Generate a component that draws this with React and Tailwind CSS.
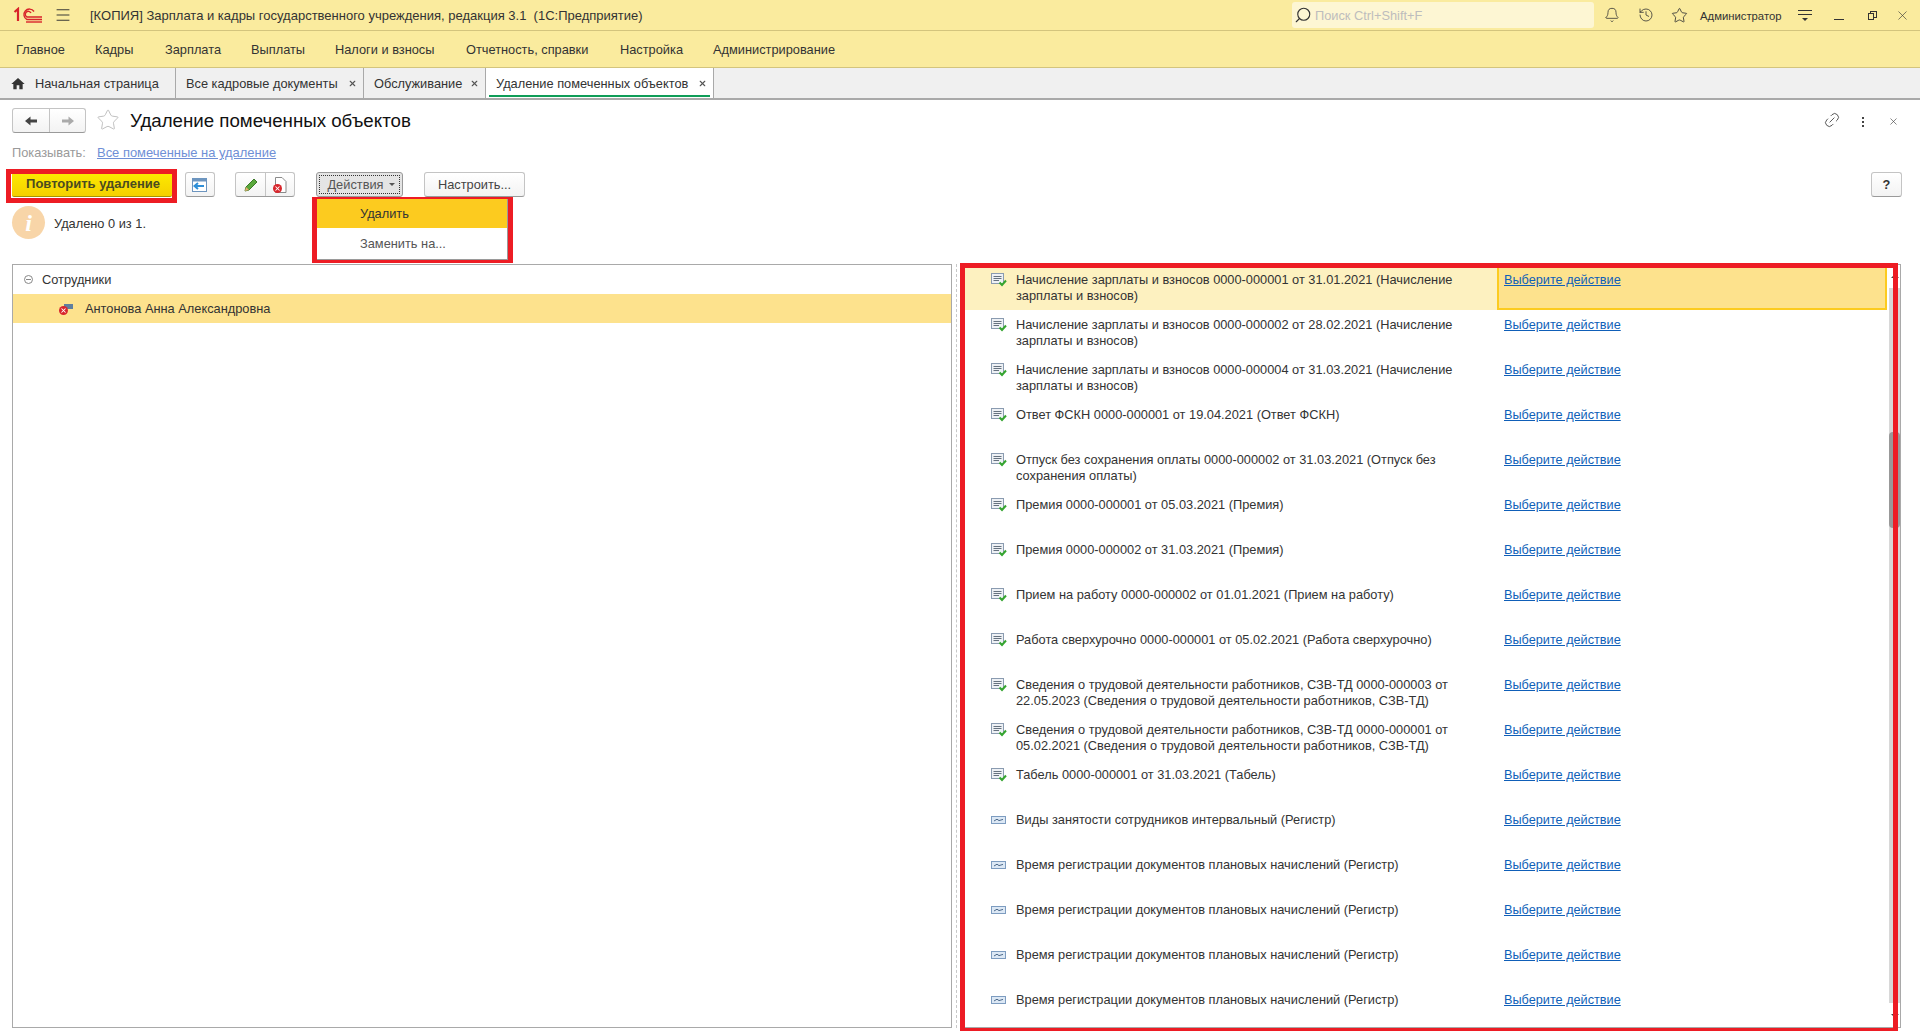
import React from "react";
import { Bell, History, Star, Link2, Search, X, Menu } from "lucide-react";
import { MdHome } from "react-icons/md";

const menu = [
  ["Главное", "w-[79px]"],
  ["Кадры", "w-[70px]"],
  ["Зарплата", "w-[86px]"],
  ["Выплаты", "w-[84px]"],
  ["Налоги и взносы", "w-[131px]"],
  ["Отчетность, справки", "w-[154px]"],
  ["Настройка", "w-[93px]"],
  ["Администрирование", "w-auto"],
];

const docs = [
  ["d", "Начисление зарплаты и взносов 0000-000001 от 31.01.2021 (Начисление", "зарплаты и взносов)"],
  ["d", "Начисление зарплаты и взносов 0000-000002 от 28.02.2021 (Начисление", "зарплаты и взносов)"],
  ["d", "Начисление зарплаты и взносов 0000-000004 от 31.03.2021 (Начисление", "зарплаты и взносов)"],
  ["d", "Ответ ФСКН 0000-000001 от 19.04.2021 (Ответ ФСКН)"],
  ["d", "Отпуск без сохранения оплаты 0000-000002 от 31.03.2021 (Отпуск без", "сохранения оплаты)"],
  ["d", "Премия 0000-000001 от 05.03.2021 (Премия)"],
  ["d", "Премия 0000-000002 от 31.03.2021 (Премия)"],
  ["d", "Прием на работу 0000-000002 от 01.01.2021 (Прием на работу)"],
  ["d", "Работа сверхурочно 0000-000001 от 05.02.2021 (Работа сверхурочно)"],
  ["d", "Сведения о трудовой деятельности работников, СЗВ-ТД 0000-000003 от", "22.05.2023 (Сведения о трудовой деятельности работников, СЗВ-ТД)"],
  ["d", "Сведения о трудовой деятельности работников, СЗВ-ТД 0000-000001 от", "05.02.2021 (Сведения о трудовой деятельности работников, СЗВ-ТД)"],
  ["d", "Табель 0000-000001 от 31.03.2021 (Табель)"],
  ["r", "Виды занятости сотрудников интервальный (Регистр)"],
  ["r", "Время регистрации документов плановых начислений (Регистр)"],
  ["r", "Время регистрации документов плановых начислений (Регистр)"],
  ["r", "Время регистрации документов плановых начислений (Регистр)"],
  ["r", "Время регистрации документов плановых начислений (Регистр)"],
];

function Logo() {
  return (
    <svg width="30" height="16" viewBox="0 0 30 16" fill="none" stroke="#d8232a">
      <path d="M1.5 5 L5 2 V14" strokeWidth="2.2" />
      <path d="M21 4.5 A5.5 5.5 0 1 0 14 12.5 H29" strokeWidth="1.4" />
      <path d="M18 6 A3 3 0 1 0 14 10 H29" strokeWidth="1.4" />
      <path d="M13 15 H29" strokeWidth="1.4" />
    </svg>
  );
}

function DocIcon() {
  return (
    <svg width="16" height="14" viewBox="0 0 16 14" className="shrink-0">
      <rect x="0.5" y="0.5" width="12" height="10" fill="#eef1f5" stroke="#8a9bb0" />
      <path d="M2.5 3.5 H10.5 M2.5 5.5 H10.5 M2.5 7.5 H8" stroke="#66727f" />
      <path d="M8.5 9.5 L11 12 L15 7.5" fill="none" stroke="#35a52f" strokeWidth="2" />
    </svg>
  );
}

function RegIcon() {
  return (
    <svg width="16" height="9" viewBox="0 0 16 9" className="shrink-0">
      <rect x="0.5" y="0.5" width="14" height="7" fill="#dce8f5" stroke="#7d9cc0" />
      <path d="M3 5 L6 3.2 L8 4.6 L12 3.4" fill="none" stroke="#4d6a8a" />
    </svg>
  );
}

function NavArrow({ color, flip }) {
  return (
    <svg width="14" height="12" viewBox="0 0 14 12" className={flip ? "-scale-x-100" : ""}>
      <path d="M1 6 L6.5 1.5 V4.5 H13 V7.5 H6.5 V10.5 Z" fill={color} />
    </svg>
  );
}

function DeletedMark({ className }) {
  return (
    <span className={"flex items-center justify-center rounded-full bg-[#d8262c] text-white " + className}>
      <X size={7} strokeWidth={3.5} />
    </span>
  );
}

function Btn({ className, children }) {
  return (
    <div className={"flex h-[25px] items-center justify-center rounded-[3px] border border-[#c4c4c4] border-b-[#9a9a9a] bg-gradient-to-b from-white to-[#f3f3f3] " + className}>
      {children}
    </div>
  );
}

function Row({ item, selected }) {
  const [kind, line1, line2] = item;
  return (
    <div className={"flex h-[45px] shrink-0 " + (selected ? "bg-[#fdf1c0]" : "")}>
      <div className={"flex w-[55px] shrink-0 justify-start pl-[30px] " + (kind === "d" ? "pt-[8px]" : "pt-[11px]")}>
        {kind === "d" ? <DocIcon /> : <RegIcon />}
      </div>
      <div className="w-[481px] shrink-0 pt-[7px] text-[#333333]">
        <div className="h-4 whitespace-nowrap">{line1}</div>
        {line2 && <div className="h-4 whitespace-nowrap">{line2}</div>}
      </div>
      <div className={"flex-1 pt-[7px] " + (selected ? "border-x-2 border-b-2 border-[#fccb1f] bg-[#fde28d] pl-[5px]" : "pl-[7px]")}>
        <span className="text-[12.7px] text-[#0f5fb8] underline">Выберите действие</span>
      </div>
    </div>
  );
}

export default function App() {
  return (
    <div className="relative flex h-[1031px] w-[1920px] flex-col overflow-hidden bg-white text-[12.8px] leading-4 text-[#333333] [font-family:'Liberation_Sans',Arial,sans-serif]">
      {/* title bar */}
      <div className="flex h-[31px] shrink-0 items-center border-b border-[#d3c47d] bg-[#faeb9e]">
        <div className="ml-[13px] flex w-[40px]"><Logo /></div>
        <Menu size={18} strokeWidth={1.3} className="ml-[1px] text-[#333333]" />
        <div className="ml-[18px] mt-px whitespace-nowrap text-[13px]">[КОПИЯ] Зарплата и кадры государственного учреждения, редакция 3.1&nbsp; (1С:Предприятие)</div>
        <div className="ml-auto flex h-[26px] w-[302px] items-center rounded-[3px] bg-[#fdf6d3] pl-[2px] text-[#bdbdbd]">
          <Search size={18} strokeWidth={1.5} className="mr-[3px] -scale-x-100 text-[#333333]" />
          <span className="mt-px">Поиск Ctrl+Shift+F</span>
        </div>
        <Bell size={16} strokeWidth={1.2} className="ml-[10px] text-[#333333]" />
        <History size={16} strokeWidth={1.2} className="ml-[18px] text-[#333333]" />
        <Star size={17} strokeWidth={1.2} className="ml-[17px] text-[#333333]" />
        <div className="ml-[12px] mt-px w-[83px] text-[11.3px]">Администратор</div>
        <div className="ml-[15px] flex w-[14px] flex-col items-center gap-[3px]">
          <div className="h-px w-[14px] bg-[#333333]" />
          <div className="h-px w-[14px] bg-[#333333]" />
          <div className="h-0 w-0 border-x-[3px] border-t-[3px] border-x-transparent border-t-[#333333]" />
        </div>
        <div className="ml-[22px] mt-[9px] h-px w-[10px] bg-[#333333]" />
        <div className="relative ml-[24px] h-[9px] w-[9px]">
          <div className="absolute left-[2px] top-0 h-[7px] w-[7px] border border-[#333333]" />
          <div className="absolute bottom-0 left-0 h-[7px] w-[6px] border border-[#333333] bg-[#faeb9e]" />
        </div>
        <X size={15} strokeWidth={1} className="ml-[18px] mr-[10px] text-[#333333]" />
      </div>

      {/* main menu */}
      <div className="flex h-[37px] shrink-0 items-center border-b border-[#d3c47d] bg-[#faeb9e] pl-[16px] pt-px">
        {menu.map(([name, w]) => (
          <div key={name} className={"whitespace-nowrap " + w}>{name}</div>
        ))}
      </div>

      {/* tabs */}
      <div className="flex h-[32px] shrink-0 border-b-2 border-[#a9a9a9] bg-[#f0f0f0]">
        <div className="flex w-[176px] items-center border-r border-[#a9a9a9] pl-[10px] pt-px">
          <MdHome size={16} className="mr-[9px] text-[#333333]" />
          Начальная страница
        </div>
        <div className="flex w-[188px] items-center justify-between border-r border-[#a9a9a9] pl-[10px] pr-[6px] pt-px">
          Все кадровые документы <X size={9} strokeWidth={3} className="text-[#555555]" />
        </div>
        <div className="flex w-[122px] items-center justify-between border-r border-[#a9a9a9] pl-[10px] pr-[6px] pt-px">
          Обслуживание <X size={9} strokeWidth={3} className="text-[#555555]" />
        </div>
        <div className="relative flex w-[228px] items-center justify-between border-r border-[#a9a9a9] bg-white pl-[10px] pr-[6px] pt-px">
          Удаление помеченных объектов <X size={9} strokeWidth={3} className="text-[#555555]" />
          <div className="absolute bottom-[1px] left-[3px] right-[3px] h-[2px] bg-[#0f9d58]" />
        </div>
      </div>

      {/* form header */}
      <div className="flex h-[33px] shrink-0 items-end pl-[12px] pr-[21px]">
        <div className="flex h-[25px] w-[74px] rounded-[3px] border border-[#c4c4c4] border-b-[#9a9a9a] bg-gradient-to-b from-white to-[#f3f3f3]">
          <div className="flex w-[37px] items-center justify-center border-r border-[#c4c4c4]">
            <NavArrow color="#444444" />
          </div>
          <div className="flex flex-1 items-center justify-center">
            <NavArrow color="#aaaaaa" flip />
          </div>
        </div>
        <Star size={24} strokeWidth={0.9} className="mb-[1px] ml-[10px] text-[#b9b9b9]" />
        <div className="mb-[2px] ml-[10px] whitespace-nowrap text-[18.7px] leading-5 text-[#111111]">Удаление помеченных объектов</div>
        <Link2 size={18} strokeWidth={1.1} className="mb-[4px] ml-auto -rotate-45 text-[#444444]" />
        <div className="mb-[6px] ml-[21px] flex flex-col gap-[2px]">
          <div className="h-[2px] w-[2px] bg-[#444444]" />
          <div className="h-[2px] w-[2px] bg-[#444444]" />
          <div className="h-[2px] w-[2px] bg-[#444444]" />
        </div>
        <X size={11} strokeWidth={1.4} className="mb-[6px] ml-[24px] text-[#444444]" />
      </div>

      <div className="mt-[12px] flex h-4 shrink-0 pl-[12px]">
        <span className="w-[85px] text-[#9a9a9a]">Показывать:</span>
        <span className="text-[12.95px] text-[#6f8fd6] underline">Все помеченные на удаление</span>
      </div>

      {/* command bar */}
      <div className="relative mt-[11px] flex h-[26px] shrink-0 pl-[12px] pr-[18px]">
        <div className="flex h-[25px] w-[160px] items-center justify-center rounded-[2px] border-b border-[#a89300] bg-gradient-to-b from-[#fdeb00] to-[#f5d000] pl-[2px] text-[13px] font-bold text-[#4b4b20]">
          Повторить удаление
        </div>
        <Btn className="ml-[13px] w-[30px]">
          <svg width="18" height="16" viewBox="0 0 18 16">
            <rect x="1.5" y="1.5" width="14" height="13" fill="#fff" stroke="#6d95bf" />
            <rect x="1.5" y="1.5" width="14" height="3" fill="#6d95bf" />
            <path d="M13 9 H4 M7 6 L3.5 9 L7 12" fill="none" stroke="#2f8fd8" strokeWidth="2" />
          </svg>
        </Btn>
        <div className="ml-[20px] flex h-[25px] w-[60px] rounded-[3px] border border-[#c4c4c4] border-b-[#9a9a9a] bg-gradient-to-b from-white to-[#f3f3f3]">
          <div className="flex w-[30px] items-center justify-center border-r border-[#c4c4c4]">
            <svg width="16" height="16" viewBox="0 0 16 16">
              <path d="M2 14 L3 10 L11 2 L14 5 L6 13 Z" fill="#5aa83c" stroke="#3c7a28" />
              <path d="M2 14 L3 10 L6 13 Z" fill="#e8b070" />
            </svg>
          </div>
          <div className="relative flex flex-1 items-center justify-center">
            <svg width="13" height="16" viewBox="0 0 13 16">
              <path d="M1.5 0.5 H8 L12 4.5 V15.5 H1.5 Z" fill="#fff" stroke="#8a8a8a" />
            </svg>
            <DeletedMark className="absolute bottom-[3px] left-[7px] h-[9px] w-[9px]" />
          </div>
        </div>
        <div className="ml-[21px] flex h-[25px] w-[87px] items-center justify-center rounded-[3px] border border-[#9a9a9a] bg-[#e4e4e4] text-[#555555]">
          <div className="flex h-[19px] w-[81px] items-center justify-center gap-[5px] border border-dotted border-[#333333] pl-[3px]">
            Действия
            <div className="h-0 w-0 border-x-[3px] border-t-[3px] border-x-transparent border-t-[#555555]" />
          </div>
        </div>
        <Btn className="ml-[21px] w-[101px] text-[#444444]">Настроить...</Btn>
        <Btn className="ml-auto w-[31px] font-bold">?</Btn>

        {/* dropdown */}
        <div className="absolute left-[317px] top-[27px] z-10 w-[191px] border-r border-b border-[#9a9a9a] bg-white">
          <div className="flex h-[29px] items-center bg-[#fccb1f] pl-[43px]">Удалить</div>
          <div className="flex h-[31px] items-center pl-[43px] text-[#555555]">Заменить на...</div>
        </div>
      </div>

      {/* message */}
      <div className="mt-[8px] flex h-[58px] shrink-0 items-start pl-[12px]">
        <div className="flex h-[33px] w-[33px] items-center justify-center rounded-full bg-[#f8d5a8] text-[24px] font-bold italic text-white [font-family:'Liberation_Serif',serif]">i</div>
        <div className="ml-[9px] mt-[10px]">Удалено 0 из 1.</div>
      </div>

      {/* panels */}
      <div className="flex min-h-0 flex-1 pb-[3px] pl-[12px] pr-[19px]">
        <div className="w-[940px] shrink-0 border border-[#a9a9a9]">
          <div className="flex h-[29px] items-center">
            <div className="ml-[11px] flex h-[9px] w-[9px] items-center justify-center rounded-full border border-[#888888]">
              <div className="h-px w-[5px] bg-[#888888]" />
            </div>
            <span className="ml-[9px]">Сотрудники</span>
          </div>
          <div className="flex h-[29px] items-center bg-[#fde28d]">
            <div className="relative ml-[46px] h-[12px] w-[14px]">
              <div className="absolute right-0 top-[1px] h-[5px] w-[9px] bg-[#5f7f9f]" />
              <DeletedMark className="absolute bottom-0 left-0 h-[9px] w-[9px]" />
            </div>
            <span className="ml-[12px]">Антонова Анна Александровна</span>
          </div>
        </div>
        <div className="mx-[4px] w-px border-l border-dashed border-[#c8c8c8]" />
        <div className="relative flex min-w-0 flex-1 flex-col overflow-hidden border border-l-0 border-[#a9a9a9] pr-[13px]">
          {docs.map((item, i) => (
            <Row key={i} item={item} selected={i === 0} />
          ))}
          <div className="absolute right-[1px] top-[9px] h-0 w-0 border-x-[4px] border-b-[4px] border-x-transparent border-b-[#444444]" />
          <div className="absolute bottom-[24px] right-0 top-[23px] w-[11px] bg-[#d8d8d8]">
            <div className="mt-[144px] h-[96px] w-full rounded-[4px] bg-[#999999]" />
          </div>
          <div className="absolute bottom-[9px] right-[1px] h-0 w-0 border-x-[4px] border-t-[4px] border-x-transparent border-t-[#444444]" />
        </div>
      </div>

      {/* red annotation frames */}
      <div className="absolute left-[6px] top-[169px] h-[34px] w-[171px] border-[5px] border-[#ed1c24]" />
      <div className="absolute left-[312px] top-[197px] h-[66px] w-[201px] border-[5px] border-[#ed1c24]" />
      <div className="absolute left-[960px] top-[263px] h-[770px] w-[938px] border-[5px] border-[#ed1c24]" />
    </div>
  );
}
